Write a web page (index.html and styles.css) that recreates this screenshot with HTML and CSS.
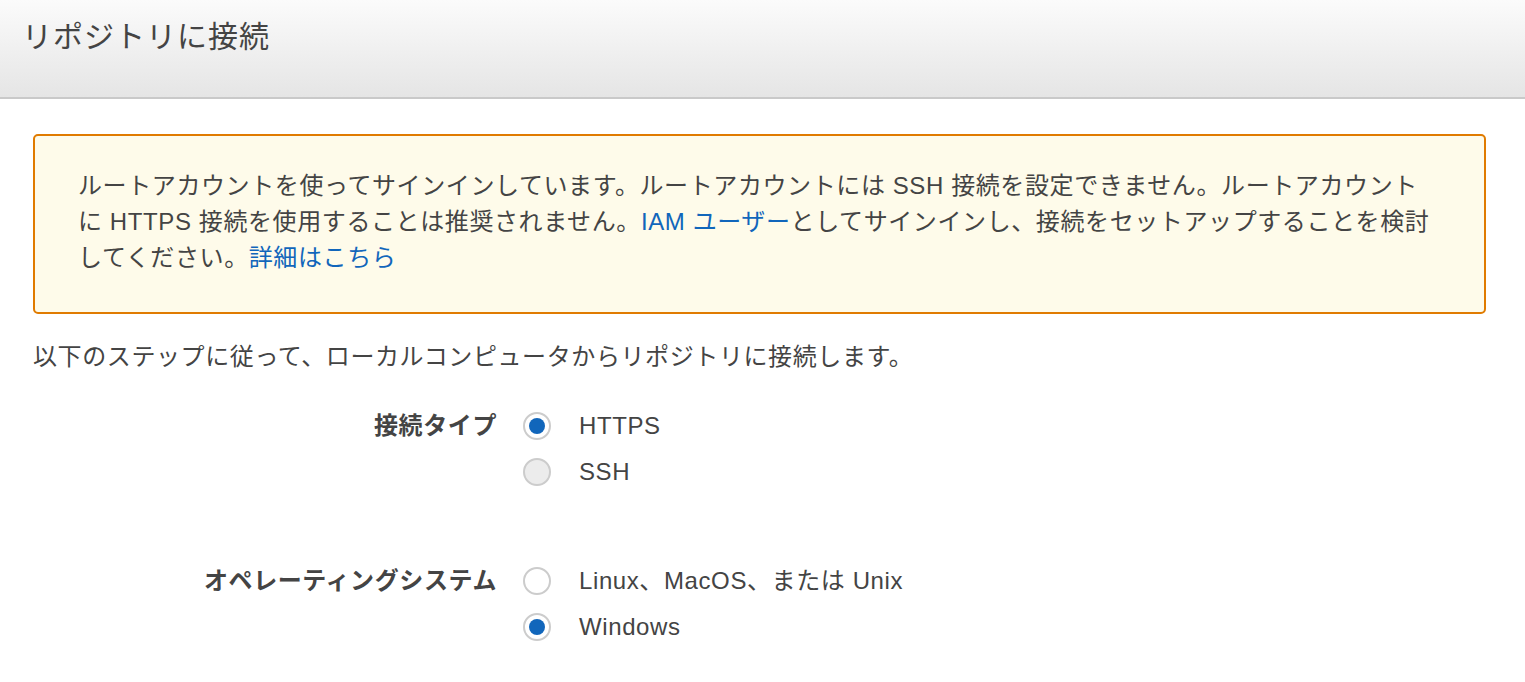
FILE: index.html
```html
<!DOCTYPE html>
<html lang="ja">
<head>
<meta charset="utf-8">
<title>リポジトリに接続</title>
<link rel="stylesheet" href="styles.css">
</head>
<body>
<header class="header">
  <h1 class="title">リポジトリに接続</h1>
</header>
<main class="content">
  <div class="alert">
    <p class="alert-text">ルートアカウントを使ってサインインしています。ルートアカウントには SSH 接続を設定できません。ルートアカウント<br>に HTTPS 接続を使用することは推奨されません。<a class="link" href="#">IAM ユーザー</a>としてサインインし、接続をセットアップすることを検討<br>してください。<a class="link" href="#">詳細はこちら</a></p>
  </div>
  <p class="intro">以下のステップに従って、ローカルコンピュータからリポジトリに接続します。</p>
  <div class="form">
    <div class="field">
      <div class="field-label">接続タイプ</div>
      <div class="options">
        <div class="option"><span class="radio checked"></span><span class="option-text">HTTPS</span></div>
        <div class="option"><span class="radio disabled"></span><span class="option-text">SSH</span></div>
      </div>
    </div>
    <div class="field">
      <div class="field-label">オペレーティングシステム</div>
      <div class="options">
        <div class="option"><span class="radio"></span><span class="option-text">Linux、MacOS、または Unix</span></div>
        <div class="option"><span class="radio checked"></span><span class="option-text">Windows</span></div>
      </div>
    </div>
  </div>
</main>
</body>
</html>
```
FILE: styles.css
```css
* { box-sizing: border-box; }
html, body { margin: 0; padding: 0; background: #fff; }
body {
  font-family: "Liberation Sans", "Noto Sans CJK JP", Arial, sans-serif;
  color: #444;
  font-size: 24px;
  line-height: 36px;
  letter-spacing: 0.6px;
}
.header {
  height: 99px;
  background: linear-gradient(to bottom, #fbfbfb 0%, #e5e5e5 100%);
  border-bottom: 2px solid #c9c9c9;
  padding: 16px 22px 0;
}
.title {
  margin: 0;
  font-size: 30px;
  font-weight: normal;
  line-height: 42px;
  letter-spacing: 1px;
  color: #444;
}
.content {
  padding: 35px 39px 0 33px;
}
.alert {
  border: 2px solid #e07b00;
  border-radius: 5px;
  background: #fefbea;
  padding: 32px 43px 36px;
  height: 180px;
}
.alert-text { margin: 0; }
.link { color: #1166bb; text-decoration: none; }
.intro { margin: 25px 0 0; }
.form {
  display: flex;
  flex-direction: column;
  gap: 63px;
  margin-top: 28px;
}
.field {
  display: grid;
  grid-template-columns: 464px 1fr;
  column-gap: 26px;
}
.field-label {
  text-align: right;
  font-weight: bold;
  line-height: 46px;
}
.options { display: flex; flex-direction: column; }
.option {
  display: flex;
  align-items: center;
  height: 46px;
  gap: 28px;
}
.radio {
  width: 28px;
  height: 28px;
  border-radius: 50%;
  border: 2px solid #cccccc;
  background: #fff;
  display: flex;
  align-items: center;
  justify-content: center;
  flex: none;
}
.radio.disabled { background: #ececec; }
.radio.checked::after {
  content: "";
  width: 16px;
  height: 16px;
  border-radius: 50%;
  background: #1166bb;
}
.option-text { line-height: 36px; }
```
